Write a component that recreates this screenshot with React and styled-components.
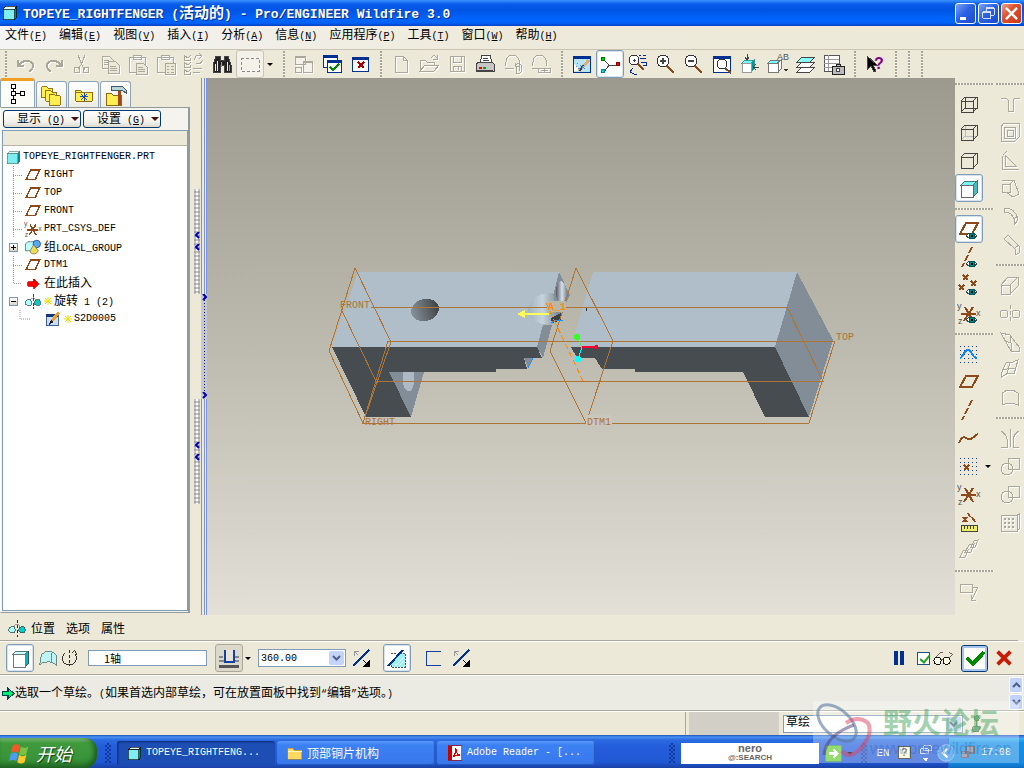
import { Fragment } from "react";
import styled, { createGlobalStyle, css } from "styled-components";

const GlobalStyle = createGlobalStyle`
  * { box-sizing: border-box; }
  body {
    margin: 0;
    background: #ece9d8;
    color: #000;
    font-family: "Liberation Mono", "Noto Sans CJK SC", monospace;
    font-size: 10px;
    line-height: 14px;
  }
  button, input, select { font: inherit; color: inherit; margin: 0; }
  button { border: 0; background: none; padding: 0; }
  ul { list-style: none; margin: 0; padding: 0; }
`;

/* ---------- text ---------- */
const Han = styled.span`
  font-family: "Noto Sans CJK SC", sans-serif;
  font-size: ${(p) => p.$size || 12}px;
`;

const HAN = /([\u3000-\u9fff\uff00-\uffef]+)/;

function Text({ children, size }) {
  return children.split(HAN).map((part, i) =>
    HAN.test(part) ? <Han key={i} $size={size}>{part}</Han> : <Fragment key={i}>{part}</Fragment>
  );
}

/* ---------- shell ---------- */
const Shell = styled.div`
  display: flex;
  flex-direction: column;
  min-height: 100vh;
  position: relative;
  overflow: hidden;
`;

const TitleBar = styled.header`
  display: flex;
  align-items: center;
  gap: 5px;
  height: 26px;
  padding: 0 2px 0 2px;
  background: linear-gradient(#3a93ff 0, #0a5cea 4px, #0054e3 10px, #0066ff 20px, #0062f5 23px, #003fc4 26px);
`;

const Title = styled.h1`
  flex: 1;
  margin: 0;
  color: #fff;
  font-size: 13px;
  line-height: 20px;
  font-weight: bold;
  white-space: pre;
  text-shadow: 1px 1px 0 #0a2a8c;
`;

const WindowButtons = styled.div`
  display: flex;
  gap: 2px;
`;

const WindowButton = styled.button`
  display: flex;
  align-items: center;
  justify-content: center;
  width: 21px;
  height: 21px;
  border: 1px solid #fff;
  border-radius: 3px;
  background: ${(p) =>
    p.$close
      ? "linear-gradient(135deg, #f0a088, #e0502c 40%, #c8381a)"
      : "linear-gradient(135deg, #7ba4f8, #2d62e4 45%, #1c48cc)"};
`;

const MenuBar = styled.nav`
  display: flex;
  align-items: center;
  gap: 12px;
  height: 24px;
  padding: 0 5px 4px;
  background: linear-gradient(90deg, #f4f4f4, #eeeadb 50%, #ece9d8);
  border-bottom: 1px solid #c9c5b2;
`;

const MenuItem = styled.button`
  white-space: nowrap;
`;

const ToolBar = styled.div`
  display: flex;
  align-items: center;
  height: 28px;
`;

const Grip = styled.span`
  width: ${(p) => p.$w || 13}px;
  height: 26px;
  background: repeating-linear-gradient(#a7a498 0 2px, #f8f7f0 2px 3px) center / 2px 100% no-repeat;
`;

const GripRow = styled.span`
  flex: none;
  width: 100%;
  height: ${(p) => p.$h || 13}px;
  background: repeating-linear-gradient(90deg, #a7a498 0 2px, #f8f7f0 2px 3px) center / 100% 2px no-repeat;
`;

const pressed = css`
  background: #fff;
  border: 1px solid #7f9db9;
  box-shadow: inset 0 0 0 1px #d8e2ea;
`;

const ToolButton = styled.button`
  flex: none;
  display: flex;
  align-items: center;
  justify-content: center;
  width: 28px;
  height: 28px;
  border: 1px solid transparent;
  border-radius: 3px;
  ${(p) => p.$on && pressed}
  ${(p) => p.$soft && "border-color: #c8c5b8; background: #f4f2e8;"}
  svg { flex: none; ${(p) => p.disabled && "filter: drop-shadow(1px 1px 0 #fff);"} }
`;

const Svg = styled.svg`
  display: block;
  flex: none;
  fill: none;
  stroke: ${(p) => p.$c || "#000"};
  stroke-width: 1;
  text { stroke: none; fill: #555; font: 9px "Liberation Sans", sans-serif; }
`;

function Icon({ s = 24, c, children, soft }) {
  return (
    <Svg width={s} height={s} viewBox="0 0 24 24" $c={c} shapeRendering={soft ? "auto" : "crispEdges"} aria-hidden="true">
      {children}
    </Svg>
  );
}

const CaretSpan = styled.span`
  width: 0;
  height: 0;
  border: ${(p) => p.$s || 3}px solid transparent;
  border-top-color: ${(p) => p.$c || "#000"};
  border-bottom: 0;
  margin: 0 ${(p) => p.$m || 0}px;
`;

const GREY = "#aca899";
const BROWN = "#8f4a1c";

/* ---------- icon drawings ---------- */
const Eye = () => (
  <g>
    <path d="M9 19q5-6 11 0q-5 5-11 0z" fill="#fff" stroke="#444" />
    <circle cx="15" cy="19" r="3" fill="#088" stroke="#055" />
    <path d="M14 18h2v2h-2z" fill="#000" stroke="none" />
  </g>
);
const Cube = () => (
  <g>
    <path d="M4 9l4-4h12l-4 4z" fill="#7ff4f4" stroke="#477" />
    <path d="M16 9l4-4v12l-4 4z" fill="#4cb8c0" stroke="#477" />
    <path d="M4 9h12v12H4z" fill="#fff" stroke="#666" />
  </g>
);
const Grid = () => (
  <path d="M3 4h18M3 8h18M3 12h18M3 16h18M3 20h18" stroke="#1a3fae" strokeDasharray="1 3" />
);
const Lens = ({ sign }) => (
  <g>
    <circle cx="9" cy="9" r="6" fill="#fff" stroke="#333" />
    <path d="M13 14l7 7" stroke="#8a4a20" strokeWidth="2" />
    {sign && <path d={sign} strokeWidth="2" />}
  </g>
);
const Csys = () => (
  <g>
    <path d="M4 13h15M8 6l8 14M16 6L7 20" stroke={BROWN} strokeWidth="2" />
    <text x="0" y="8">y</text>
    <text x="19" y="15">x</text>
    <text x="1" y="23">z</text>
  </g>
);
const Axes = () => <path d="M15 2l-3 6M11 10l-3 6M7 18l-2 4" stroke={BROWN} strokeWidth="2" />;
const Plane = () => <path d="M9 6h12l-6 11H3z" stroke={BROWN} strokeWidth="2" />;
const Pt = ({ x, y }) => <path d={`M${x} ${y}l5 5m0-5l-5 5`} stroke={BROWN} strokeWidth="2" />;

const mainTools = [
  [
    ["撤消", <path d="M4 8v6h6M5 13c4-6 14-5 14 1 0 3-2 4-4 6" strokeWidth="2" />, "off"],
    ["重做", <path d="M20 8v6h-6M19 13c-4-6-14-5-14 1 0 3 2 4 4 6" strokeWidth="2" />, "off"],
    ["剪切", <g><path d="M8 3l4 10 3 5M15 3l-4 10-3 4" /><circle cx="7" cy="18" r="3" /><circle cx="16" cy="18" r="3" /></g>, "off"],
    ["复制", <g><path d="M4 4h7l4 4v8H4zM6 8h5M6 10h6M6 12h6" /><path d="M10 9h7l4 4v8H10zM12 14h6M12 16h7M12 18h7" fill="#ece9d8" /></g>, "off"],
    ["粘贴", <g><path d="M3 5h16v15H3zM7 3h8v4H7z" /><path d="M10 11h7l4 4v7H10zM12 15h5M12 17h7M12 19h7" fill="#ece9d8" /></g>, "off"],
    ["选择性粘贴", <g><path d="M3 5h16v15H3zM7 3h8v4H7z" /><path d="M11 11h10v11H11zM13 14h2M17 14h3M13 17h2M17 17h3M13 20h2M17 20h3" fill="#ece9d8" /></g>, "off"],
    ["再生", <path d="M3 4l3 2 3-3M3 11l3 2 3-3M3 18l3 2 3-3M2 3v5h6V6M2 10v5h6v-2M2 17v5h6v-2M11 16h9M11 20h7M12 8l2-4 5-1M17 1l3 3-3 3M21 8l-3 4-4-1" />, "off"],
    ["查找", <g fill="#222"><path d="M6 4h4v4h4V4h4l3 9v7h-7v-7h-4v7H3v-7z" /><path d="M5 12v7M7 9v10M17 10v9" stroke="#eee" /><path d="M11 10v5M19 13v6" stroke="#999" /></g>],
    ["选取框", <path d="M3 6h18v13H3z" strokeDasharray="3 2" stroke="#888" />, "soft"],
  ],
  [
    ["窗口", <g><path d="M3 4h10v8H3zM3 5h10M11 9h9v11h-9zM11 10h9M3 15h6v5H3z" fill="#f4f2e8" /></g>, "off"],
    ["激活", <g stroke="#003090"><path d="M3 3h14v12H3z" fill="#fff" /><path d="M3 4h14" strokeWidth="3" /><path d="M7 8h14v12H7z" fill="#fff" /><path d="M7 9h14" strokeWidth="3" /><path d="M10 15l3 3 6-6" stroke="#080" strokeWidth="2" /></g>],
    ["关闭", <g stroke="#003090"><path d="M4 5h16v14H4z" fill="#fff" /><path d="M4 6h16" strokeWidth="3" /><path d="M10 10l6 6M16 10l-6 6" stroke="#a00" strokeWidth="2" /></g>],
  ],
  [
    ["新建", <path d="M6 4h8l4 4v12H6zM14 4v4h4" />, "off"],
    ["打开", <path d="M3 19V8h5l2 2h7v3M3 19l5-6h14l-5 6zM14 6c2-3 4-3 6 0M20 3v4h-4" />, "off"],
    ["保存", <path d="M5 4h14v15H5zM8 4v6h8V4M8 19v-5h8v5M13 15v3" />, "off"],
    ["打印", <g><path d="M7 11l2-8h8l2 8z" fill="#fff" /><path d="M10 6h5M10 8h6" /><path d="M3 12l3-2h13l2 2v7H3z" fill="#c6c6c6" stroke="#444" /><path d="M4 19h16" strokeWidth="2" stroke="#444" /><path d="M6 16h3" stroke="red" strokeWidth="2" /><path d="M10 16h3" stroke="#0a0" strokeWidth="2" /></g>],
    ["发送", <path d="M4 14l2-8c4-5 10-3 12 2v6h-4v-3M4 16h9M15 13q3-3 5 0v7q-3 4-5 0v-5M18 15v4" />, "off"],
    ["链接", <path d="M3 14l2-8c4-5 10-3 12 2v6M3 16h6M9 16h6v4H9zM15 16h6v4h-6zM12 18h7" />, "off"],
  ],
  [
    ["重画", <g><path d="M3 4h17v16H3z" fill="#b8e4f8" stroke="#003090" /><path d="M3 5h17" stroke="#003090" strokeWidth="3" /><path d="M4 12l8 7H4z" fill="#fff" stroke="none" /><path d="M19 8L9 19" stroke="#e0b070" strokeWidth="3" /><path d="M13 13l-3 6" stroke="#123f8c" strokeWidth="2" /><path d="M7 11l8 6M6 14l5 4" stroke="#4a8ad0" strokeDasharray="2 1" /></g>],
    ["旋转中心", <g><path d="M5 7l6 6h9M11 13l-5 7" /><circle cx="5" cy="7" r="2" fill="#0c0" stroke="#070" /><circle cx="20" cy="12" r="2" fill="red" stroke="#800" /><circle cx="5" cy="19" r="2" fill="#0dd" stroke="#088" /></g>, "on"],
    ["定向模式", <g><circle cx="8" cy="8" r="5" fill="#fff" stroke="#333" /><path d="M7 8h3M8 7v3" /><path d="M12 12l6 6" stroke="#8a4a20" strokeWidth="2" /><path d="M13 3h2M17 3h3M14 6h6M15 10h5v3h-3M7 16l-3 4 4 2M8 22h3" stroke="#0a2a9c" /></g>],
    ["放大", <Lens sign="M6 9h6M9 6v6" />],
    ["缩小", <Lens sign="M6 9h6" />],
    ["重新调整", <g><path d="M3 4h17v16H3z" fill="#fff" stroke="#003090" /><path d="M3 5h17" stroke="#003090" strokeWidth="3" /><circle cx="12" cy="12" r="5" fill="#fff" stroke="#333" /><path d="M15 16l6 5" stroke="#8a4a20" strokeWidth="2" /></g>],
    ["重定向", <g><path d="M4 11l3-3h9l-3 3z" fill="#7ff" stroke="#399" /><path d="M13 11l3-3v9l-3 3z" fill="#099" stroke="#399" /><path d="M4 11h9v9H4z" fill="#fff" stroke="#999" /><path d="M9 2v5M7 5l2 3 2-3M21 15h-6M18 12l-3 3 3 3" /></g>],
    ["已命名视图", <g><path d="M2 11l3-3h9l-3 3z" fill="#7ff" stroke="#777" /><path d="M2 11h10v9H2zM12 11l3-3v9l-3 3" fill="#fff" stroke="#777" /><text x="11" y="8">AB</text><path d="M17 17h5l-2 3z" fill="#333" stroke="none" /></g>],
    ["层", <g><path d="M3 20l5-5h13l-5 5z" fill="#fff" /><path d="M3 15l5-5h13l-5 5z" fill="#fff" /><path d="M3 10l5-5h13l-5 5z" fill="#8ff" /></g>],
    ["视图管理器", <g><path d="M2 3h15v16H2z" fill="#fff" stroke="#555" /><path d="M2 7h15M2 11h15M2 15h15M6 3v16" stroke="#999" /><path d="M10 14h12v8H10zM14 12h4v2h-4z" fill="#bbb" stroke="#222" /><circle cx="16" cy="18" r="2" fill="#fff" /></g>],
  ],
  [
    ["帮助", <g><path d="M4 4v14l4-4 3 6 2-1-3-6h4z" fill="#000" /><text x="11" y="17" style={{ font: "bold 16px 'Liberation Sans'", fill: "#80008c" }}>?</text></g>],
  ],
];

const viewTools = [
  [
    ["线框", <path d="M4 9h12v11H4zM8 5h12v11H8zM4 9l4-4M16 9l4-4M16 20l4-4M4 20l4-4" />],
    ["隐藏线", <g><path d="M8 5v11h12M4 20l4-4" stroke="#bbb" /><path d="M4 9h12v11H4zM8 5h12v11M4 9l4-4h12l-4 4M16 20l4-4" /></g>],
    ["无隐藏线", <path d="M4 9h12v11H4zM8 5h12v11M4 9l4-4M16 9l4-4M16 20l4-4" />],
    ["着色", <Cube />, "on"],
  ],
  [
    ["平面显示", <g><Plane /><Eye /></g>, "on"],
    ["轴显示", <g><Axes /><Eye /></g>],
    ["点显示", <g><Pt x={6} y={2} /><Pt x={2} y={12} /><Pt x={14} y={8} /><Eye /></g>],
    ["坐标系显示", <g><Csys /><Eye /></g>],
  ],
  [
    ["草绘", <g><Grid /><path d="M3 16c3 0 4-8 8-8s4 8 9 8" stroke="#0a84ff" strokeWidth="2" /></g>],
    ["平面", <Plane />],
    ["轴", <Axes />],
    ["曲线", <path d="M2 17c3-8 6-6 9-4s6-3 10-5" stroke={BROWN} strokeWidth="2" />],
    ["点", <g><Grid /><Pt x={7} y={11} /></g>, "caret"],
    ["坐标系", <Csys />],
    ["分析", <g><path d="M4 15h16v6H4z" fill="#ee6" stroke="#444" /><path d="M7 16v3M10 16v3M13 16v3M16 16v3" /><path d="M6 7l4 5M10 7l-4 5M11 3l2 4M15 7l3 5" stroke={BROWN} strokeWidth="2" /></g>],
    ["参照", <path d="M3 19l3-6 5-1-3 7zM8 14l4-7 5-1-3 8zM14 9l3-6 4-1-3 7z" />, "off"],
  ],
  [["注释", <path d="M3 5h12v8H3zM15 8h6l-6 12M14 16v5h5" />, "off"]],
];

const featureTools = [
  [
    ["孔", <path d="M3 6h5l2 2v11h5V8l2-2h5" />, "off"],
    ["壳", <path d="M3 7l3-4h15v14l-4 4H3zM6 7h11v11H6zM9 10h6v6H9z" />, "off"],
    ["筋", <path d="M4 8v13h17M7 7l11 11H7zM9 3L5 7" />, "off"],
    ["拔模", <path d="M4 8h8v8H4zM4 4h12l5 14-6 3-7-5M16 4l-4 4" />, "off"],
    ["倒圆角", <path d="M6 4q12 0 14 12l-4 5V15Q14 8 6 8zM16 15l4-3" />, "off"],
    ["倒角", <path d="M6 7l4-4 11 11v7l-4 2v-6zM17 16l4-3" />, "off"],
  ],
  [
    ["拉伸", <path d="M3 12h9v9H3zM3 12l7-8h10v9l-8 8M12 12l8-8" />, "off"],
    ["旋转", <g><circle cx="6" cy="13" r="4" /><circle cx="18" cy="13" r="4" /><path d="M12 4v18" strokeDasharray="4 2" /></g>, "off"],
    ["扫描", <path d="M3 4l9 2 9 12v4h-8zM3 4l4 8 6 2v8M12 6v8" />, "off"],
    ["混合", <path d="M3 17l5-11q6 0 12-3l-4 14q-6-3-13 4zM6 13q6-3 12-1M12 5l-3 12" />, "off"],
    ["填充", <path d="M4 8q8-6 16 0v12q-8-4-16 0z" />, "off"],
  ],
  [
    ["镜像", <path d="M12 3v18M3 5q5 3 6 8v8H3M21 5q-5 3-6 8v8h6" />, "off"],
    ["合并", <g><circle cx="9" cy="15" r="6" /><path d="M10 4h11v11H10z" /></g>, "off"],
    ["修剪", <g><circle cx="9" cy="15" r="6" /><path d="M10 4h11v11H10z" /></g>, "off"],
    ["阵列", <g><path d="M3 5h16v16H3zM19 5l2-1v15l-2 2" /><path d="M6 9h11M6 13h11M6 17h11" strokeDasharray="2 2" strokeWidth="2" /></g>, "off"],
  ],
];

function Tool({ def }) {
  const [name, art, mode] = def;
  return (
    <ToolButton type="button" aria-label={name} $on={mode === "on"} $soft={mode === "soft"} disabled={mode === "off"}>
      <Icon c={mode === "off" ? GREY : "#444"}>{art}</Icon>
    </ToolButton>
  );
}

/* ---------- work area ---------- */
const Work = styled.main`
  flex: 1;
  display: flex;
  min-height: 0;
`;

const Navigator = styled.aside`
  flex: none;
  width: 190px;
  display: flex;
  flex-direction: column;
  padding-bottom: 2px;
`;

const Tabs = styled.div`
  display: flex;
  align-items: flex-end;
  gap: 1px;
  height: 29px;
  padding-left: 0;
`;

const Tab = styled.button`
  display: flex;
  align-items: center;
  justify-content: center;
  width: ${(p) => (p.$on ? 35 : 31)}px;
  height: ${(p) => (p.$on ? 29 : 26)}px;
  border: 1px solid #8fa5b5;
  border-top: ${(p) => (p.$on ? "3px solid #f0a020" : "1px solid #8fa5b5")};
  border-bottom: 0;
  border-radius: 3px 3px 0 0;
  background: ${(p) => (p.$on ? "#fbfbf8" : "linear-gradient(#fff, #ecebe4)")};
`;

const NavPanel = styled.div`
  flex: 1;
  display: flex;
  flex-direction: column;
  padding: 2px 0 1px 1px;
  border: 1px solid #919b9c;
  border-left-color: #fff;
  border-right-width: 2px;
  background: #f4f3ee;
`;

const NavButtons = styled.div`
  display: flex;
  gap: 2px;
  height: 20px;
  padding-left: 1px;
`;

const NavButton = styled.button`
  display: flex;
  align-items: center;
  justify-content: center;
  gap: 6px;
  padding-left: 12px;
  width: 78px;
  height: 18px;
  border: 1px solid #003c74;
  border-radius: 3px;
  background: linear-gradient(#fff, #f1f0ea 70%, #dcd8cc);
`;

const TreeHead = styled.div`
  height: 16px;
  border: 1px solid #7f9db9;
  border-bottom-color: #b8b5a4;
  background: #ece9d8;
`;

const Tree = styled.ul`
  && { padding: 2px 0 0 1px; }
  flex: 1;
  border: 1px solid #7f9db9;
  border-top: 0;
  background: #fff;
`;

const TreeRow = styled.li`
  display: flex;
  align-items: center;
  height: 18px;
  gap: 2px;
  white-space: pre;
`;

const RootRow = styled(TreeRow)`
  padding-left: 2px;
`;

const Branch = styled.span`
  flex: none;
  display: flex;
  align-items: center;
  justify-content: center;
  width: ${(p) => p.$w || 18}px;
  height: 18px;
`;

const Toggle = styled.button`
  width: 9px;
  height: 9px;
  border: 1px solid #7898b5;
  background: linear-gradient(#000, #000) center / 5px 1px no-repeat,
    ${(p) => !p.$open && "linear-gradient(#000, #000) center / 1px 5px no-repeat,"} linear-gradient(#fff, #d8d4c4);
`;

const StarIcon = () => (
  <Svg width="8" height="8" viewBox="0 0 8 8" $c="#e8e000" aria-hidden="true">
    <path d="M4 0v8M0 4h8M1 1l6 6M7 1L1 7" />
  </Svg>
);

const PartIcon = ({ s = 15, edge = "#366" }) => (
  <Icon s={s}>
    <path d="M2 6l4-4h16l-3 4z" fill="#dff" stroke={edge} />
    <path d="M19 6l3-4v16l-3 4z" fill="#088" stroke={edge} />
    <path d="M2 6h17v16H2z" fill="#7feeee" stroke={edge} />
  </Icon>
);
const Datum = () => (
  <Icon s={18}><path d="M9 5h12l-6 13H3z" stroke={BROWN} strokeWidth="2" /></Icon>
);
const RevolveIcon = ({ s = 18 }) => (
  <Icon s={s}>
    <path d="M8 11Q12 4 16 11" stroke="#888" />
    <circle cx="6" cy="14" r="4" fill="#aff" stroke="#355" />
    <circle cx="18" cy="14" r="4" fill="#0cc" stroke="#355" />
    <path d="M12 2v21" strokeDasharray="4 2" />
  </Icon>
);

const treeRows = [
  { label: "RIGHT", icon: <Datum /> },
  { label: "TOP", icon: <Datum /> },
  { label: "FRONT", icon: <Datum /> },
  { label: "PRT_CSYS_DEF", icon: <Icon s={18}><Csys /></Icon> },
  {
    label: "组LOCAL_GROUP",
    toggle: "closed",
    icon: (
      <Icon s={18} soft>
        <path d="M2 8l3-3h9v9l-3 3H2z" fill="#bff" stroke="#467" />
        <circle cx="17" cy="8" r="5" fill="#59a8f0" stroke="#14418c" />
        <path d="M13 9l6 8q-2 5-8 4-3-1-3-4z" fill="#f0dc50" stroke="#765" />
      </Icon>
    ),
  },
  { label: "DTM1", icon: <Datum /> },
  { label: "在此插入", icon: <Icon s={18}><path d="M5 10h8V6l7 7-7 7v-4H5z" fill="red" stroke="#a00" /></Icon>, last: true },
  { label: "旋转 1 (2)", toggle: "open", star: true, icon: <RevolveIcon /> },
];

const BranchLine = ({ half, toggle }) => (
  <Branch>
    {toggle ? (
      <Toggle type="button" aria-label={toggle === "open" ? "折叠" : "展开"} $open={toggle === "open"} />
    ) : (
      <Svg width="18" height="18" viewBox="0 0 18 18" $c="#999" shapeRendering="crispEdges">
        <path d={half ? "M9 0v9h9" : "M9 0v18M9 9h9"} strokeDasharray="1 1" />
      </Svg>
    )}
  </Branch>
);

const Sashes = styled.div`
  flex: none;
  display: flex;
  width: 17px;
  padding-left: 4px;
`;

const Sash = styled.div`
  display: flex;
  flex-direction: column;
  align-items: center;
  justify-content: center;
  width: 6px;
  gap: 105px;
  margin-right: 1px;
`;

const SashGrip = styled.button`
  display: flex;
  flex-direction: column;
  align-items: center;
  justify-content: center;
  gap: 5px;
  width: 6px;
  height: 105px;
  background: conic-gradient(#fff 25%, #c4c4c4 0 50%, #a4a4a4 0 75%, #c4c4c4 0) 0 0 / 4px 4px;
`;

const BlueSash = styled.div`
  flex: 1;
  display: flex;
  align-items: center;
  background: linear-gradient(90deg, #7b93dc 0 1px, #ece9d8 1px 3px, #7b93dc 3px 4px, #f4f3ec 4px 5px, #7b93dc 5px);
`;

const BlueGrip = styled.button`
  display: flex;
  flex-direction: column;
  align-items: center;
  justify-content: space-between;
  width: 100%;
  height: 105px;
  background: repeating-linear-gradient(#0020a0 0 1px, transparent 1px 3px) center / 1px 100% no-repeat, #c8c8c8;
`;

const Chevron = ({ right }) => (
  <Svg width="5" height="7" viewBox="0 0 5 7" $c="#0000c0">
    <path d={right ? "M1 0l3 3-3 3" : "M4 0L1 3l3 3"} strokeWidth="2" />
  </Svg>
);

const Viewport = styled.section`
  flex: 1;
  min-width: 0;
  background: linear-gradient(#9c998f, #bebbb0 52%, #e2e0d7);
  svg { display: block; width: 100%; height: 100%; }
`;

const SideTools = styled.div`
  flex: none;
  display: flex;
  gap: 2px;
  width: 69px;
`;

const ToolColumn = styled.div`
  flex: none;
  display: flex;
  flex-direction: column;
  width: ${(p) => p.$w || 39}px;
`;

const ToolLine = styled.div`
  display: flex;
  align-items: center;
  gap: 2px;
`;

function Column({ groups, w }) {
  return (
    <ToolColumn $w={w}>
      {groups.map((g, i) => (
        <Fragment key={i}>
          <GripRow $h={i ? 13 : 12} />
          {g.map((def) => (
            <ToolLine key={def[0]}>
              <Tool def={def} />
              {def[2] === "caret" && <CaretSpan />}
            </ToolLine>
          ))}
        </Fragment>
      ))}
    </ToolColumn>
  );
}

function Model() {
  return (
    <svg viewBox="207 78 748 537" role="img" aria-label="TOPEYE_RIGHTFENGER" shapeRendering="crispEdges" fontFamily="Liberation Mono, monospace" fontSize="10">
      <defs>
        <linearGradient id="hole"><stop offset="0" stopColor="#87919a" /><stop offset="1" stopColor="#3f4346" /></linearGradient>
        <linearGradient id="ball"><stop offset="0" stopColor="#a3b2bd" /><stop offset=".5" stopColor="#c6d3dc" /><stop offset="1" stopColor="#87939d" /></linearGradient>
        <linearGradient id="pin"><stop offset="0" stopColor="#55595e" /><stop offset=".6" stopColor="#d5e0ec" /><stop offset="1" stopColor="#8f99a3" /></linearGradient>
      </defs>
      {/* left finger */}
      <path d="M332 347L358 272H560L553 301L544 325L537 347z" fill="#b0bec9" />
      <path d="M389 372H424L411 417z" fill="#838d97" />
      <path d="M403 372H414V382Q413 391 409 391Q404 391 403 382z" fill="#adb9c4" />
      <path d="M332 347H537L542 358H524L527 369H496V372H389L411 417H366z" fill="#474c50" />
      <path d="M537 347L543 325H552L543 358z" fill="#838d97" />
      <path d="M524 358H533L528 368z" fill="#838d97" />
      <path d="M533 358L528 368" stroke="#1e90ff" />
      <ellipse cx="425" cy="310" rx="14" ry="11" transform="rotate(-15 425 310)" fill="url(#hole)" />
      <path d="M559 272L570 295L565 305L557 320L552 300z" fill="#838d97" />
      <path d="M553 293C540 292 529 299 528 310C528 319 536 325 552 325L557 312z" fill="url(#ball)" />
      <ellipse cx="561" cy="292" rx="5" ry="11" fill="url(#pin)" />
      <path d="M551 318L561 313V320L552 323z" fill="#3b4045" />
      <path d="M551 323L556 320H563" stroke="#1e90ff" fill="none" />
      {/* right finger */}
      <path d="M593 272H797L775 347H571z" fill="#b0bec9" />
      <path d="M797 272L833 340L809 417L775 347z" fill="#838d97" />
      <path d="M571 347H775L809 417H765L743 372H635V369H602L595 358H577z" fill="#474c50" />
      <path d="M582 307H586V311" stroke="#333" fill="none" />
      {/* datum planes */}
      <g fill="none" stroke="#ad7433">
        <path d="M355 268L391 342L363 423L329 351z" />
        <path d="M342 311L376 381H823L787 307H371" />
        <path d="M388 341H835L809 423H363z" />
        <path d="M576 268L613 341L586 423L550 351z" />
      </g>
      <rect x="547" y="301" width="19" height="11" fill="#b9b6aa" />
      <path d="M546 303L583 381" stroke="#ff8a00" strokeDasharray="6 3" />
      <path d="M525 314H549" stroke="#ffff5a" strokeWidth="2" />
      <path d="M517 314L525 310V318z" fill="#ffff5a" />
      <path d="M577 337L582 347" stroke="#3f3" />
      <path d="M582 347H596" stroke="#f03" strokeWidth="2" />
      <path d="M582 347L578 359" stroke="#0ff" />
      <circle cx="577" cy="337" r="3" fill="#3f2" />
      <circle cx="596" cy="347" r="2" fill="#e03" />
      <circle cx="578" cy="359" r="3" fill="#0ff" />
      <rect x="586" y="415" width="26" height="11" fill="#cac7bd" />
      <g fill="#ad7433">
        <text x="340" y="308">FRONT</text>
        <text x="365" y="425">RIGHT</text>
        <text x="587" y="425">DTM1</text>
        <text x="836" y="340">TOP</text>
      </g>
      <text x="548" y="310" fill="#ff8a00" fontWeight="bold">A_1</text>
    </svg>
  );
}

/* ---------- dashboard ---------- */
const DashTabs = styled.div`
  display: flex;
  align-items: center;
  gap: 11px;
  height: 26px;
  padding: 0 7px;
  margin: 0 6px 0 0;
  border-bottom: 1px solid #aca899;
`;

const DashTab = styled.button`
  display: flex;
  align-items: center;
  gap: 4px;
`;

const Dash = styled.div`
  display: flex;
  align-items: center;
  height: 34px;
  padding: 0 8px 0 6px;
  border-top: 1px solid #fff;
  border-bottom: 1px solid #aca899;
`;

const AxisInput = styled.input`
  width: 119px;
  height: 16px;
  margin: 0 8px 0 4px;
  padding: 0 0 0 15px;
  border: 1px solid #7f9db9;
  background: #fff;
  font-family: "Noto Sans CJK SC", sans-serif;
  font-size: 11px;
`;

const ComboBox = styled.span`
  position: relative;
  display: inline-flex;
  width: ${(p) => p.$w}px;
  select {
    appearance: none;
    width: 100%;
    height: 18px;
    padding: 0 18px 0 2px;
    border: 1px solid #7f9db9;
    border-radius: 0;
    background: #fff;
    font-size: ${(p) => p.$size || 10}px;
    line-height: 15px;
  }
`;

const ComboArrow = styled.span`
  position: absolute;
  top: 2px;
  right: 2px;
  display: flex;
  align-items: center;
  justify-content: center;
  width: 15px;
  height: 14px;
  border-radius: 2px;
  background: #c3d3fb;
  pointer-events: none;
`;

const DownMark = ({ up }) => (
  <Svg width="9" height="6" viewBox="0 0 9 6" $c="#4d6185"><path d={up ? "M1 5l3.5-3.5L8 5" : "M1 1l3.5 3.5L8 1"} strokeWidth="2" /></Svg>
);

function Combo({ label, options, w, size }) {
  return (
    <ComboBox $w={w} $size={size}>
      <select aria-label={label}>{options.map((o) => <option key={o}>{o}</option>)}</select>
      <ComboArrow><DownMark /></ComboArrow>
    </ComboBox>
  );
}

const Spacer = styled.span`
  flex: ${(p) => (p.$w ? "none" : 1)};
  width: ${(p) => p.$w || 0}px;
`;

const SlimButton = styled(ToolButton)`
  width: ${(p) => p.$w || 24}px;
`;

const DepthButton = styled(ToolButton)`
  border-color: #aca899;
  background: #dcd9cc;
`;

const OkButton = styled(ToolButton)`
  width: 27px;
  height: 27px;
  margin: 0 4px 0 6px;
  border-color: #003c74;
  background: #fbfbf8;
  box-shadow: inset 0 0 0 2px #a8c4ee;
`;

const Check = styled.input`
  && {
    appearance: none;
    width: 13px;
    height: 13px;
    margin: 0 1px 0 6px;
    border: 1px solid #1c5180;
    background: #fff;
  }
  &:checked::before {
    content: "";
    display: block;
    width: 4px;
    height: 8px;
    margin-left: 4px;
    border: solid #21a121;
    border-width: 0 2px 2px 0;
    transform: rotate(40deg);
  }
`;

const FlipIcon = () => (
  <Icon>
    <path d="M4 20L20 4" stroke="#003090" strokeWidth="2" />
    <path d="M5 10V5h5M5 5l4 4" stroke="#999" />
    <path d="M14 14l5 5" />
    <path d="M20 15v5h-5z" fill="#000" />
  </Icon>
);

const Message = styled.div`
  display: flex;
  align-items: center;
  height: 36px;
  padding: 0 1px 0 2px;
  border-top: 1px solid #fff;
  border-bottom: 1px solid #aca899;
  background: #ebebe4;
  p { flex: 1; margin: 0; }
`;

const ScrollButtons = styled.div`
  display: flex;
  flex-direction: column;
  gap: 1px;
`;

const ScrollButton = styled.button`
  display: flex;
  align-items: center;
  justify-content: center;
  width: 14px;
  height: 16px;
  border: 1px solid #fff;
  border-radius: 2px;
  background: #c3d3fb;
`;

const Status = styled.div`
  display: flex;
  align-items: center;
  height: 24px;
  padding-right: 39px;
  border-top: 1px solid #fff;
`;

const StatusBox = styled.span`
  width: 94px;
  height: 100%;
  border-left: 1px solid #aca899;
  padding-left: 3px;
  margin-right: 4px;
  background: #d2cfc7 content-box;
`;

/* ---------- taskbar ---------- */
const TaskBar = styled.footer`
  display: flex;
  align-items: center;
  height: 33px;
  padding-top: 3px;
  color: #fff;
  background: linear-gradient(#1c50b8 0, #4a90f0 2px, #2a6ae0 5px, #245ddb 12px, #2158d4 27px, #1941a5 33px);
`;

const Start = styled.button`
  display: flex;
  align-items: center;
  gap: 5px;
  width: 97px;
  height: 30px;
  padding-left: 9px;
  border-radius: 0 12px 12px 0;
  background: linear-gradient(#7fb87a 0, #3f9a3c 5px, #3a943a 20px, #2a7a2c 30px);
  box-shadow: inset -3px -2px 5px #1c5c20;
  color: #fff;
  font-style: italic;
  text-shadow: 1px 1px 1px #143c14;
`;

const BlueDots = styled.span`
  flex: none;
  width: 6px;
  height: 20px;
  margin: 0 6px 0 8px;
  background: conic-gradient(#123a9c 25%, transparent 0 50%, #123a9c 0 75%, transparent 0) 0 0 / 4px 4px;
`;

const Task = styled.button`
  display: flex;
  align-items: center;
  gap: 4px;
  flex: 0 1 158px;
  height: 24px;
  margin-right: 2px;
  padding-left: 10px;
  border-radius: 3px;
  color: #fff;
  white-space: nowrap;
  background: ${(p) => (p.$on ? "#1c4eb4" : "linear-gradient(#5a9afc, #3c81f3 4px, #3878ec)")};
  box-shadow: ${(p) => (p.$on ? "inset 1px 1px 2px #0c2c70" : "inset -1px -1px 1px #2458bc")};
`;

const NeroBox = styled.form`
  display: flex;
  flex-direction: column;
  align-items: center;
  justify-content: center;
  width: 138px;
  height: 21px;
  background: #fff;
  color: #666;
  font: bold 11px/10px "Liberation Sans", sans-serif;
  small { font-size: 8px; line-height: 10px; }
`;

const Lang = styled.button`
  width: 20px;
  color: #fff;
  font-size: 11px;
`;

const Tray = styled.div`
  display: flex;
  align-items: center;
  gap: 5px;
  width: 76px;
  height: 30px;
  border-left: 1px solid #1668c0;
  background: linear-gradient(#3ab4f4, #1290e8 5px, #1488e0 25px, #0c6cc0);
  svg:first-child { margin-left: -12px; }
`;

const Watermark = styled.div`
  position: absolute;
  right: 5px;
  bottom: 5px;
  width: 206px;
  height: 62px;
  background: rgba(255, 255, 255, 0.3);
  pointer-events: none;
`;

const MarkLogo = styled.svg`
  position: absolute;
  left: 2px;
  top: 2px;
`;

const MarkName = styled.div`
  position: absolute;
  left: 70px;
  top: 3px;
  color: rgba(70, 165, 100, 0.5);
  font: bold 29px/34px "Noto Sans CJK SC", sans-serif;
`;

const MarkUrl = styled.div`
  position: absolute;
  left: 57px;
  top: 38px;
  color: rgba(30, 90, 170, 0.35);
  font: 16px/20px "Liberation Sans", sans-serif;
`;

const menus = [
  ["文件", "F"], ["编辑", "E"], ["视图", "V"], ["插入", "I"], ["分析", "A"],
  ["信息", "N"], ["应用程序", "P"], ["工具", "T"], ["窗口", "W"], ["帮助", "H"],
];

const Folder = ({ x = 0, y = 0, w = 17 }) => (
  <path d={`M${x + 3} ${y + 5}h5l2 2h${w - 7}v10h-${w}z`} fill="#ffee50" stroke="#8a6a10" />
);

function App() {
  return (
    <Shell>
      <GlobalStyle />
      <TitleBar>
        <PartIcon s={16} edge="#000" />
        <Title><Text size={15}>TOPEYE_RIGHTFENGER (活动的) - Pro/ENGINEER Wildfire 3.0</Text></Title>
        <WindowButtons>
          <WindowButton type="button" aria-label="最小化">
            <Icon s={19} c="#fff"><path d="M5 18h8" strokeWidth="4" /></Icon>
          </WindowButton>
          <WindowButton type="button" aria-label="还原">
            <Icon s={19} c="#fff"><path d="M9 9V5h10v9h-4M9 6h10M5 10h10v8H5zM5 11h10" /></Icon>
          </WindowButton>
          <WindowButton type="button" aria-label="关闭" $close>
            <Icon s={19} c="#fff" soft><path d="M5 5l14 14M19 5L5 19" strokeWidth="3" /></Icon>
          </WindowButton>
        </WindowButtons>
      </TitleBar>

      <MenuBar>
        {menus.map(([name, key]) => (
          <MenuItem key={key} type="button"><Han>{name}</Han>(<u>{key}</u>)</MenuItem>
        ))}
      </MenuBar>

      <ToolBar>
        {mainTools.map((group, i) => (
          <Fragment key={i}>
            <Grip $w={i === 0 ? 12 : 13} />
            {group.map((def) => <Tool key={def[0]} def={def} />)}
            {i === 0 && <CaretSpan $m={3} />}
            {i === 0 && <Spacer $w={1} />}
          </Fragment>
        ))}
        <Grip /><Grip /><Grip />
      </ToolBar>

      <Work>
        <Navigator>
          <Tabs>
            <Tab type="button" aria-label="模型树" $on>
              <Icon><path d="M5 2h4v4H5zM5 9h4v4H5zM5 17h4v4H5zM14 9h4v4h-4zM7 6v3M7 13v4M9 11h5" /></Icon>
            </Tab>
            <Tab type="button" aria-label="文件夹">
              <Icon s={22}><Folder x={-2} y={-2} w={12} /><Folder x={2} y={2} w={12} /><Folder x={6} y={6} w={12} /></Icon>
            </Tab>
            <Tab type="button" aria-label="收藏夹">
              <Icon s={22}><Folder y={2} w={18} /><path d="M3 9h18v10H3z" fill="#ffee50" stroke="#8a6a10" /><path d="M8 14h8M12 10v8M9 11l6 6M15 11l-6 6" stroke="#1040c0" /></Icon>
            </Tab>
            <Tab type="button" aria-label="连接">
              <Icon s={24}><Folder y={5} x={-1} w={15} /><path d="M15 8v14" stroke="#a04818" strokeWidth="3" /><path d="M7 3h11l4 4v3l-4-3H7z" fill="#b8d4d4" stroke="#456" /></Icon>
            </Tab>
          </Tabs>
          <NavPanel>
            <NavButtons>
              <NavButton type="button"><span><Han>显示</Han> (<u>O</u>)</span><CaretSpan $s={4} $c="#401010" /></NavButton>
              <NavButton type="button"><span><Han>设置</Han> (<u>G</u>)</span><CaretSpan $s={4} $c="#401010" /></NavButton>
            </NavButtons>
            <TreeHead />
            <Tree>
              <RootRow><PartIcon edge="#577" />TOPEYE_RIGHTFENGER.PRT</RootRow>
              {treeRows.map((r) => (
                <TreeRow key={r.label}>
                  <BranchLine half={r.last} toggle={r.toggle} />
                  {r.icon}
                  {r.star && <StarIcon />}
                  <span><Text>{r.label}</Text></span>
                </TreeRow>
              ))}
              <TreeRow>
                <Branch $w={38}>
                  <Svg width="14" height="18" viewBox="0 0 14 18" $c="#999"><path d="M4 0v9h10" strokeDasharray="1 1" /></Svg>
                </Branch>
                <Icon s={18}>
                  <path d="M3 6h16v15H3z" fill="#c8dcf8" stroke="#123878" />
                  <path d="M3 7h16" stroke="#123878" strokeWidth="4" />
                  <path d="M20 3L10 15" stroke="#e8a030" strokeWidth="4" />
                  <path d="M9 14l-2 5 5-3z" fill="#333" />
                </Icon>
                <StarIcon />
                <span>S2D0005</span>
              </TreeRow>
            </Tree>
          </NavPanel>
        </Navigator>

        <Sashes>
          <Sash>
            <SashGrip type="button" aria-label="收起"><Chevron /><Chevron /></SashGrip>
            <SashGrip type="button" aria-label="收起导航器"><Chevron /><Chevron /></SashGrip>
          </Sash>
          <BlueSash>
            <BlueGrip type="button" aria-label="展开浏览器"><Chevron right /><Chevron right /></BlueGrip>
          </BlueSash>
        </Sashes>

        <Viewport><Model /></Viewport>

        <SideTools>
          <Column groups={viewTools} />
          <Column groups={featureTools} w={28} />
        </SideTools>
      </Work>

      <DashTabs>
        <DashTab type="button"><RevolveIcon s={20} /><Han>位置</Han></DashTab>
        <DashTab type="button"><Han>选项</Han></DashTab>
        <DashTab type="button"><Han>属性</Han></DashTab>
      </DashTabs>

      <Dash>
        <ToolButton type="button" aria-label="实体" $on>
          <Icon><path d="M5 8l3-3h12v13l-3 3" fill="#0bb" stroke="#355" /><path d="M5 8l3-3h12l-3 3z" fill="#cff" stroke="#577" /><path d="M5 8h12v13H5z" fill="#fff" stroke="#777" /></Icon>
        </ToolButton>
        <Spacer $w={2} />
        <SlimButton type="button" aria-label="曲面">
          <Icon s={20}><path d="M2 20L4 8q8-8 18 0v13q-6-6-12-4-5 0-8 3z" fill="#bff4f4" stroke="#577" /><path d="M16 6v11" stroke="#577" /></Icon>
        </SlimButton>
        <SlimButton type="button" aria-label="旋转轴" $w={20}>
          <Icon s={20}><path d="M6 6c-5 5-4 13 4 14 9 1 12-8 8-13M14 7l4-4 3 5" stroke="#111" /><path d="M11 2v20" strokeDasharray="4 2" /></Icon>
        </SlimButton>
        <Spacer $w={4} />
        <AxisInput aria-label="旋转轴收集器" defaultValue="1轴" />
        <DepthButton type="button" aria-label="角度选项">
          <Icon><path d="M2 11h4M18 11h4M2 15h20" stroke="#888" strokeWidth="2" /><path d="M2 20h20" stroke="#555" strokeWidth="3" /><path d="M8 4v12h9V4" fill="#e6e3d8" stroke="#1440a0" strokeWidth="2" /></Icon>
        </DepthButton>
        <CaretSpan $m={2} />
        <Spacer $w={5} />
        <Combo label="角度" options={["360.00"]} w={88} />
        <Spacer $w={1} />
        <ToolButton type="button" aria-label="反向"><FlipIcon /></ToolButton>
        <Spacer $w={8} />
        <ToolButton type="button" aria-label="移除材料" $on>
          <Icon><path d="M6 7h14v14H6z" fill="#9ff0f0" stroke="#555" strokeDasharray="2 1" /><path d="M6 8l10-1-10 11z" fill="#fff" stroke="none" /><path d="M3 20L18 4" stroke="#003090" strokeWidth="2" /><path d="M10 20l9-9M14 20l5-5" stroke="#fff" /></Icon>
        </ToolButton>
        <Spacer $w={8} />
        <ToolButton type="button" aria-label="加厚"><Icon><path d="M20 5H5v14h15" stroke="#1440a0" /></Icon></ToolButton>
        <ToolButton type="button" aria-label="切换方向"><FlipIcon /></ToolButton>
        <Spacer />
        <SlimButton type="button" aria-label="暂停"><Icon c="#003090"><path d="M9 5v14M15 5v14" strokeWidth="4" /></Icon></SlimButton>
        <Check type="checkbox" defaultChecked aria-label="预览" />
        <SlimButton type="button" aria-label="眼镜">
          <Icon s={22}><circle cx="6" cy="15" r="4" fill="#fffde8" /><circle cx="16" cy="15" r="4" fill="#fffde8" /><path d="M10 14h2M4 11l5-5h3M19 12l3-4-3-2" stroke="#654" /></Icon>
        </SlimButton>
        <OkButton type="button" aria-label="完成"><Icon><path d="M4 12l6 6L21 6" stroke="#080" strokeWidth="4" /></Icon></OkButton>
        <SlimButton type="button" aria-label="取消"><Icon s={22} soft><path d="M5 5l14 14M19 5L5 19" stroke="#c81c08" strokeWidth="4" /></Icon></SlimButton>
      </Dash>

      <Message>
        <Icon s={13}><path d="M1 8h10V2l11 10-11 10v-6H1z" fill="#0e7" stroke="#044" strokeWidth="2" /></Icon>
        <p><Text>选取一个草绘。(如果首选内部草绘，可在放置面板中找到“编辑”选项。)</Text></p>
        <ScrollButtons>
          <ScrollButton type="button" aria-label="上一条"><DownMark up /></ScrollButton>
          <ScrollButton type="button" aria-label="下一条"><DownMark /></ScrollButton>
        </ScrollButtons>
      </Message>

      <Status>
        <Spacer />
        <StatusBox />
        <Combo label="过滤器" options={["草绘"]} w={180} size={12} />
        <Spacer $w={2} />
        <Icon s={20}><circle cx="14" cy="5" r="3" fill="#5a5" stroke="#363" /><path d="M14 8v6M9 15h9l-2 6h-6z" stroke="#363" fill="#8a8" /></Icon>
      </Status>

      <TaskBar>
        <Start type="button">
          <Icon s={22} soft>
            <g stroke="none">
              <path d="M4 4q4-3 8 0l-2 8q-4-3-8 0z" fill="#f05a28" />
              <path d="M13 5q4 3 8 0l-2 8q-4 3-8 0z" fill="#7cc242" />
              <path d="M2 13q4-3 8 0l-2 8q-4-3-8 0z" fill="#4a9cf0" />
              <path d="M11 14q4 3 8 0l-2 8q-4 3-8 0z" fill="#fcc82c" />
            </g>
          </Icon>
          <Han $size={18}>开始</Han>
        </Start>
        <BlueDots />
        <Task type="button" $on><PartIcon edge="#000" />TOPEYE_RIGHTFENG...</Task>
        <Task type="button">
          <Icon s={16}><path d="M1 5h8l2 3h11v13H1z" fill="#ffd860" stroke="#b88820" /><path d="M1 10h21" stroke="#fff6c0" strokeWidth="2" /></Icon>
          <Han>顶部铜片机构</Han>
        </Task>
        <Task type="button">
          <Icon s={16}><path d="M2 1h20v22H2z" fill="#fff" stroke="#a00" /><path d="M2 1h5v22H2z" fill="#c00" stroke="none" /><path d="M9 18q6-8 4-13 0 8 7 11-6-2-11 2z" stroke="#d00" strokeWidth="2" /></Icon>
          Adobe Reader - [...
        </Task>
        <Spacer />
        <BlueDots />
        <NeroBox aria-label="Nero Search"><span>nero</span><small>@:SEARCH</small></NeroBox>
        <Spacer $w={6} />
        <Icon s={17}><path d="M1 1h22v22H1z" fill="#6c3" stroke="#4a2" /><path d="M5 12h12M12 6l6 6-6 6" stroke="#fff" strokeWidth="3" /></Icon>
        <Spacer $w={5} />
        <CaretSpan />
        <BlueDots />
        <Lang type="button">EN</Lang>
        <Spacer $w={4} />
        <Icon s={16}><path d="M2 2h18v18H2z" fill="#fffbd0" stroke="#222" strokeWidth="2" /><text x="6" y="17" style={{ font: "bold 16px 'Liberation Sans'" }}>?</text></Icon>
        <Spacer $w={4} />
        <Icon s={18} c="#fff"><path d="M9 2h10v7H9zM5 6h10v7H5z" /><path d="M7 18h9l-4 5z" fill="#fff" stroke="none" /></Icon>
        <Spacer $w={13} />
        <Tray>
          <Icon s={18} c="#fff" soft><circle cx="12" cy="12" r="11" fill="#3a94f0" stroke="#8cc8ff" /><path d="M14 6l-6 6 6 6" strokeWidth="3" /></Icon>
          <Icon s={16}><path d="M9 2h12v10H9zM2 10h10v9H2z" fill="#889" stroke="#556" strokeWidth="2" /></Icon>
          <time>17:08</time>
        </Tray>
      </TaskBar>

      <Watermark>
        <MarkLogo width="64" height="58" viewBox="0 0 64 58" fill="none" aria-hidden="true">
          <ellipse cx="22" cy="20" rx="23" ry="13" transform="rotate(42 22 20)" stroke="#5878a0" strokeOpacity=".6" strokeWidth="3" />
          <path d="M31 20q12-8 22 0q6 12-10 28q-10 8-16 0" stroke="#e04060" strokeOpacity=".5" strokeWidth="4" />
          <path d="M9 52q2-20 30-30" stroke="#503878" strokeOpacity=".5" strokeWidth="3" />
        </MarkLogo>
        <MarkName>野火论坛</MarkName>
        <MarkUrl>www.proewildfire.cn</MarkUrl>
      </Watermark>
    </Shell>
  );
}

export default App;
